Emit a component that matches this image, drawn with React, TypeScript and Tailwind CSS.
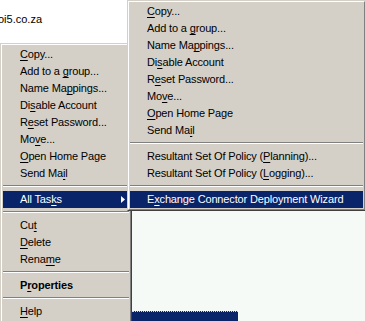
import React from 'react';

type Item =
  | { sep: true }
  | { label: string; key?: number; bold?: boolean; active?: boolean; sub?: boolean };

const mainItems: Item[] = [
  { label: 'Copy...', key: 0 },
  { label: 'Add to a group...', key: 9 },
  { label: 'Name Mappings...', key: 7 },
  { label: 'Disable Account', key: 2 },
  { label: 'Reset Password...', key: 1 },
  { label: 'Move...', key: 2 },
  { label: 'Open Home Page', key: 0 },
  { label: 'Send Mail', key: 7 },
  { sep: true },
  { label: 'All Tasks', key: 7, active: true, sub: true },
  { sep: true },
  { label: 'Cut', key: 2 },
  { label: 'Delete', key: 0 },
  { label: 'Rename', key: 4 },
  { sep: true },
  { label: 'Properties', key: 1, bold: true },
  { sep: true },
  { label: 'Help', key: 0 },
];

const taskItems: Item[] = [
  { label: 'Copy...', key: 0 },
  { label: 'Add to a group...', key: 9 },
  { label: 'Name Mappings...', key: 7 },
  { label: 'Disable Account', key: 2 },
  { label: 'Reset Password...', key: 1 },
  { label: 'Move...', key: 2 },
  { label: 'Open Home Page', key: 0 },
  { label: 'Send Mail', key: 7 },
  { sep: true },
  { label: 'Resultant Set Of Policy (Planning)...', key: 25 },
  { label: 'Resultant Set Of Policy (Logging)...', key: 25 },
  { sep: true },
  { label: 'Exchange Connector Deployment Wizard', key: 1, active: true },
];

function Label({ text, at }: { text: string; at?: number }) {
  if (at === undefined) return <>{text}</>;
  return (
    <>
      {text.slice(0, at)}
      <span className="underline underline-offset-[2px]">{text[at]}</span>
      {text.slice(at + 1)}
    </>
  );
}

function Menu({ items }: { items: Item[] }) {
  return (
    <div className="border border-t-[#d4d0c8] border-l-[#d4d0c8] border-r-[#404040] border-b-[#404040] bg-[#d4d0c8]">
      <div className="border border-t-white border-l-white border-r-[#808080] border-b-[#808080] p-px">
        {items.map((it, i) =>
          'sep' in it ? (
            <div key={i} className="pt-[3px] pb-[4px]">
              <div className="h-px bg-[#808080]" />
              <div className="h-px bg-white" />
            </div>
          ) : (
            <div
              key={i}
              className={`flex h-[17px] items-center justify-between whitespace-nowrap pl-[17px] pr-[4px] tracking-[-0.15px] ${
                it.active ? 'bg-[#0a246a] text-white' : 'text-black'
              } ${it.bold ? 'font-bold' : ''}`}
            >
              <span>
                <Label text={it.label} at={it.key} />
              </span>
              {it.sub && (
                <svg width="4" height="7" viewBox="0 0 4 7" className="shrink-0">
                  <path d="M0 0L4 3.5L0 7Z" fill="currentColor" />
                </svg>
              )}
            </div>
          )
        )}
      </div>
    </div>
  );
}

export default function App() {
  return (
    <div className="relative h-[321px] w-[365px] overflow-hidden bg-white font-['Liberation_Sans',Arial,sans-serif] text-[11px] leading-none">
      {/* window content behind the menus */}
      <div className="flex h-full flex-col">
        <div className="h-[211px] bg-white pt-[14px]">
          <div className="ml-[-2px] text-black">oi5.co.za</div>
        </div>
        <div className="flex-1 bg-[#f5faf7] pl-[132px] pt-[105px]">
          <div className="h-[10px] w-[106px] border-t border-dotted border-[#f0e080] bg-[#0a246a]" />
        </div>
      </div>

      <div className="absolute left-0 top-[43px] w-[132px]">
        <Menu items={mainItems} />
      </div>

      <div className="absolute left-[127px] top-0 w-[239px]">
        <Menu items={taskItems} />
      </div>
    </div>
  );
}
